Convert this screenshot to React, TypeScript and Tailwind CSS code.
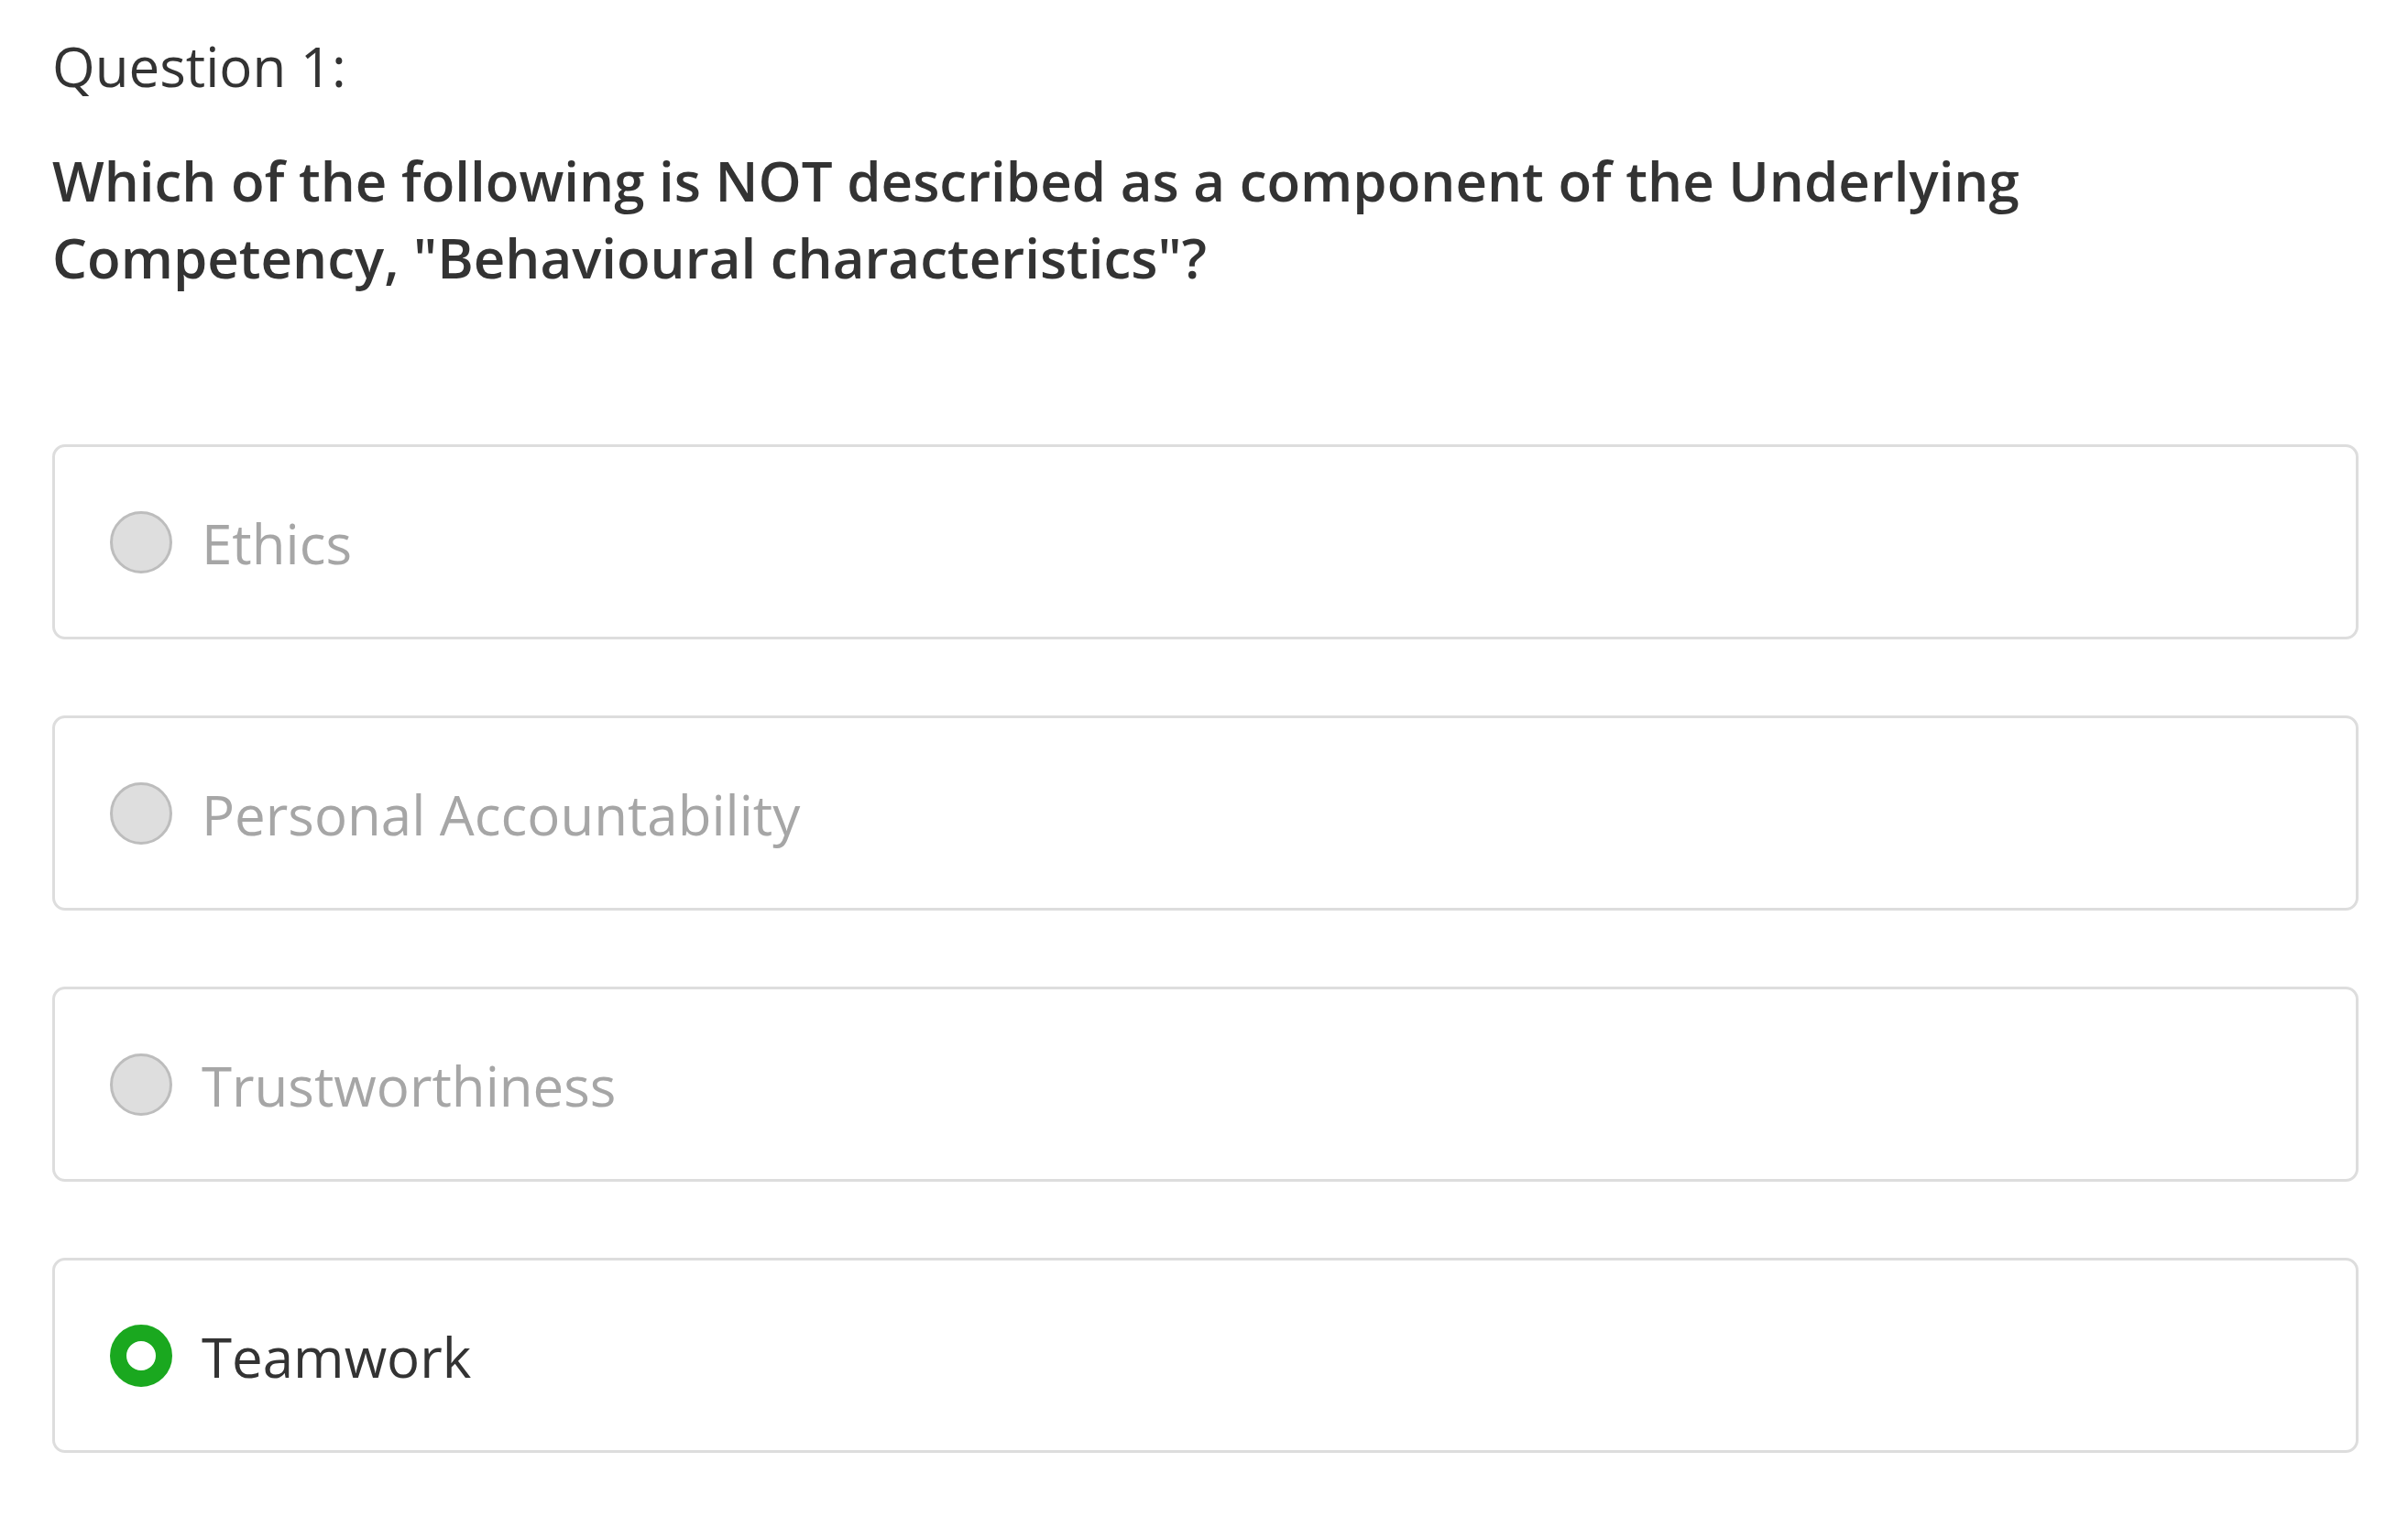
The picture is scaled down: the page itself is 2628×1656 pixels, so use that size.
import React from "react";

const options = [
  { label: "Ethics", selected: false },
  { label: "Personal Accountability", selected: false },
  { label: "Trustworthiness", selected: false },
  { label: "Teamwork", selected: true },
];

export default function App() {
  return (
    <div
      className="min-h-screen bg-white pl-[57px] pr-[54px] pt-[30px] text-[#333333]"
      style={{ fontFamily: '"Open Sans", "Noto Sans", sans-serif' }}
    >
      <div className="text-[60px] leading-[84px] font-normal">Question 1:</div>
      <div className="mt-[41px] text-[60px] leading-[84px] font-semibold">
        Which of the following is NOT described as a component of the Underlying
        <br />
        Competency, "Behavioural characteristics"?
      </div>
      <div className="mt-[162px] flex flex-col gap-[83px]">
        {options.map((o) => (
          <div
            key={o.label}
            className="flex h-[213px] items-center rounded-[14px] border-[3px] border-[#dddddd] bg-white pl-[60px]"
          >
            {o.selected ? (
              <div className="h-[68px] w-[68px] shrink-0 rounded-full border-[18px] border-[#1aa81f] bg-white" />
            ) : (
              <div className="h-[68px] w-[68px] shrink-0 rounded-full border-[3px] border-[#bdbdbd] bg-[#dedede]" />
            )}
            <span
              className={
                "ml-[32px] pt-[3px] text-[60px] leading-none " +
                (o.selected ? "text-[#333333]" : "text-[#a6a6a6]")
              }
            >
              {o.label}
            </span>
          </div>
        ))}
      </div>
    </div>
  );
}
